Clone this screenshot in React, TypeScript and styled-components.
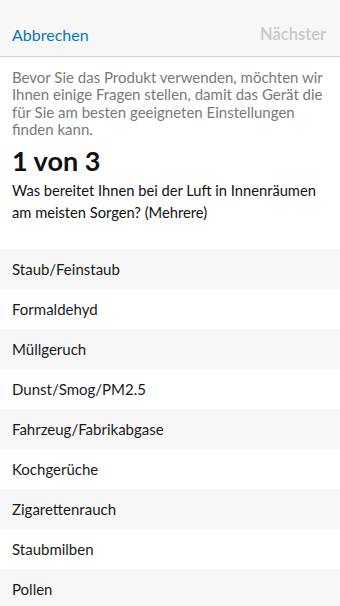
import styled, { createGlobalStyle } from 'styled-components'

const GlobalStyle = createGlobalStyle`
  html, body {
    margin: 0;
    padding: 0;
    background: #ffffff;
    font-family: Lato, "Open Sans", "Liberation Sans", sans-serif;
  }
`

const Screen = styled.div`
  width: 340px;
  height: 606px;
  overflow: hidden;
  display: flex;
  flex-direction: column;
  background: #ffffff;
`

const Header = styled.div`
  height: 57px;
  flex-shrink: 0;
  display: flex;
  align-items: flex-end;
  justify-content: space-between;
  padding: 0 14px 12px 12px;
  box-sizing: border-box;
  background: #f7f7f7;
  border-bottom: 1px solid #d4d4d4;
`

const HeaderButton = styled.span<{ $disabled?: boolean }>`
  font-size: ${p => (p.$disabled ? '16.5px' : '16px')};
  color: ${p => (p.$disabled ? '#c9c9c9' : '#0b78b3')};
  font-weight: ${p => (p.$disabled ? 600 : 400)};
`

const Intro = styled.p`
  margin: 12px 4px 0 12px;
  font-size: 15px;
  line-height: 17.3px;
  color: #7a7a7a;
`

const Step = styled.h1`
  margin: 5px 12px 0;
  font-size: 27px;
  font-weight: 700;
  color: #111;
  line-height: 36px;
`

const Question = styled.p`
  margin: 0 12px 0;
  font-size: 14.7px;
  line-height: 22px;
  color: #111;
`

const OptionList = styled.div`
  margin-top: 26px;
  display: flex;
  flex-direction: column;
`

const Option = styled.div<{ $shaded: boolean }>`
  height: 40px;
  flex-shrink: 0;
  display: flex;
  align-items: center;
  padding-left: 12px;
  font-size: 15px;
  color: #1a1a1a;
  background: ${p => (p.$shaded ? '#f7f7f7' : '#ffffff')};
`

const options = [
  'Staub/Feinstaub',
  'Formaldehyd',
  'Müllgeruch',
  'Dunst/Smog/PM2.5',
  'Fahrzeug/Fabrikabgase',
  'Kochgerüche',
  'Zigarettenrauch',
  'Staubmilben',
  'Pollen',
]

export default function App() {
  return (
    <>
      <GlobalStyle />
      <Screen>
        <Header>
          <HeaderButton>Abbrechen</HeaderButton>
          <HeaderButton $disabled>Nächster</HeaderButton>
        </Header>
        <Intro>
          Bevor Sie das Produkt verwenden, möchten wir Ihnen einige Fragen stellen, damit das Gerät die
          für Sie am besten geeigneten Einstellungen finden kann.
        </Intro>
        <Step>1 von 3</Step>
        <Question>Was bereitet Ihnen bei der Luft in Innenräumen am meisten Sorgen? (Mehrere)</Question>
        <OptionList>
          {options.map((o, i) => (
            <Option key={o} $shaded={i % 2 === 0}>
              {o}
            </Option>
          ))}
        </OptionList>
      </Screen>
    </>
  )
}
